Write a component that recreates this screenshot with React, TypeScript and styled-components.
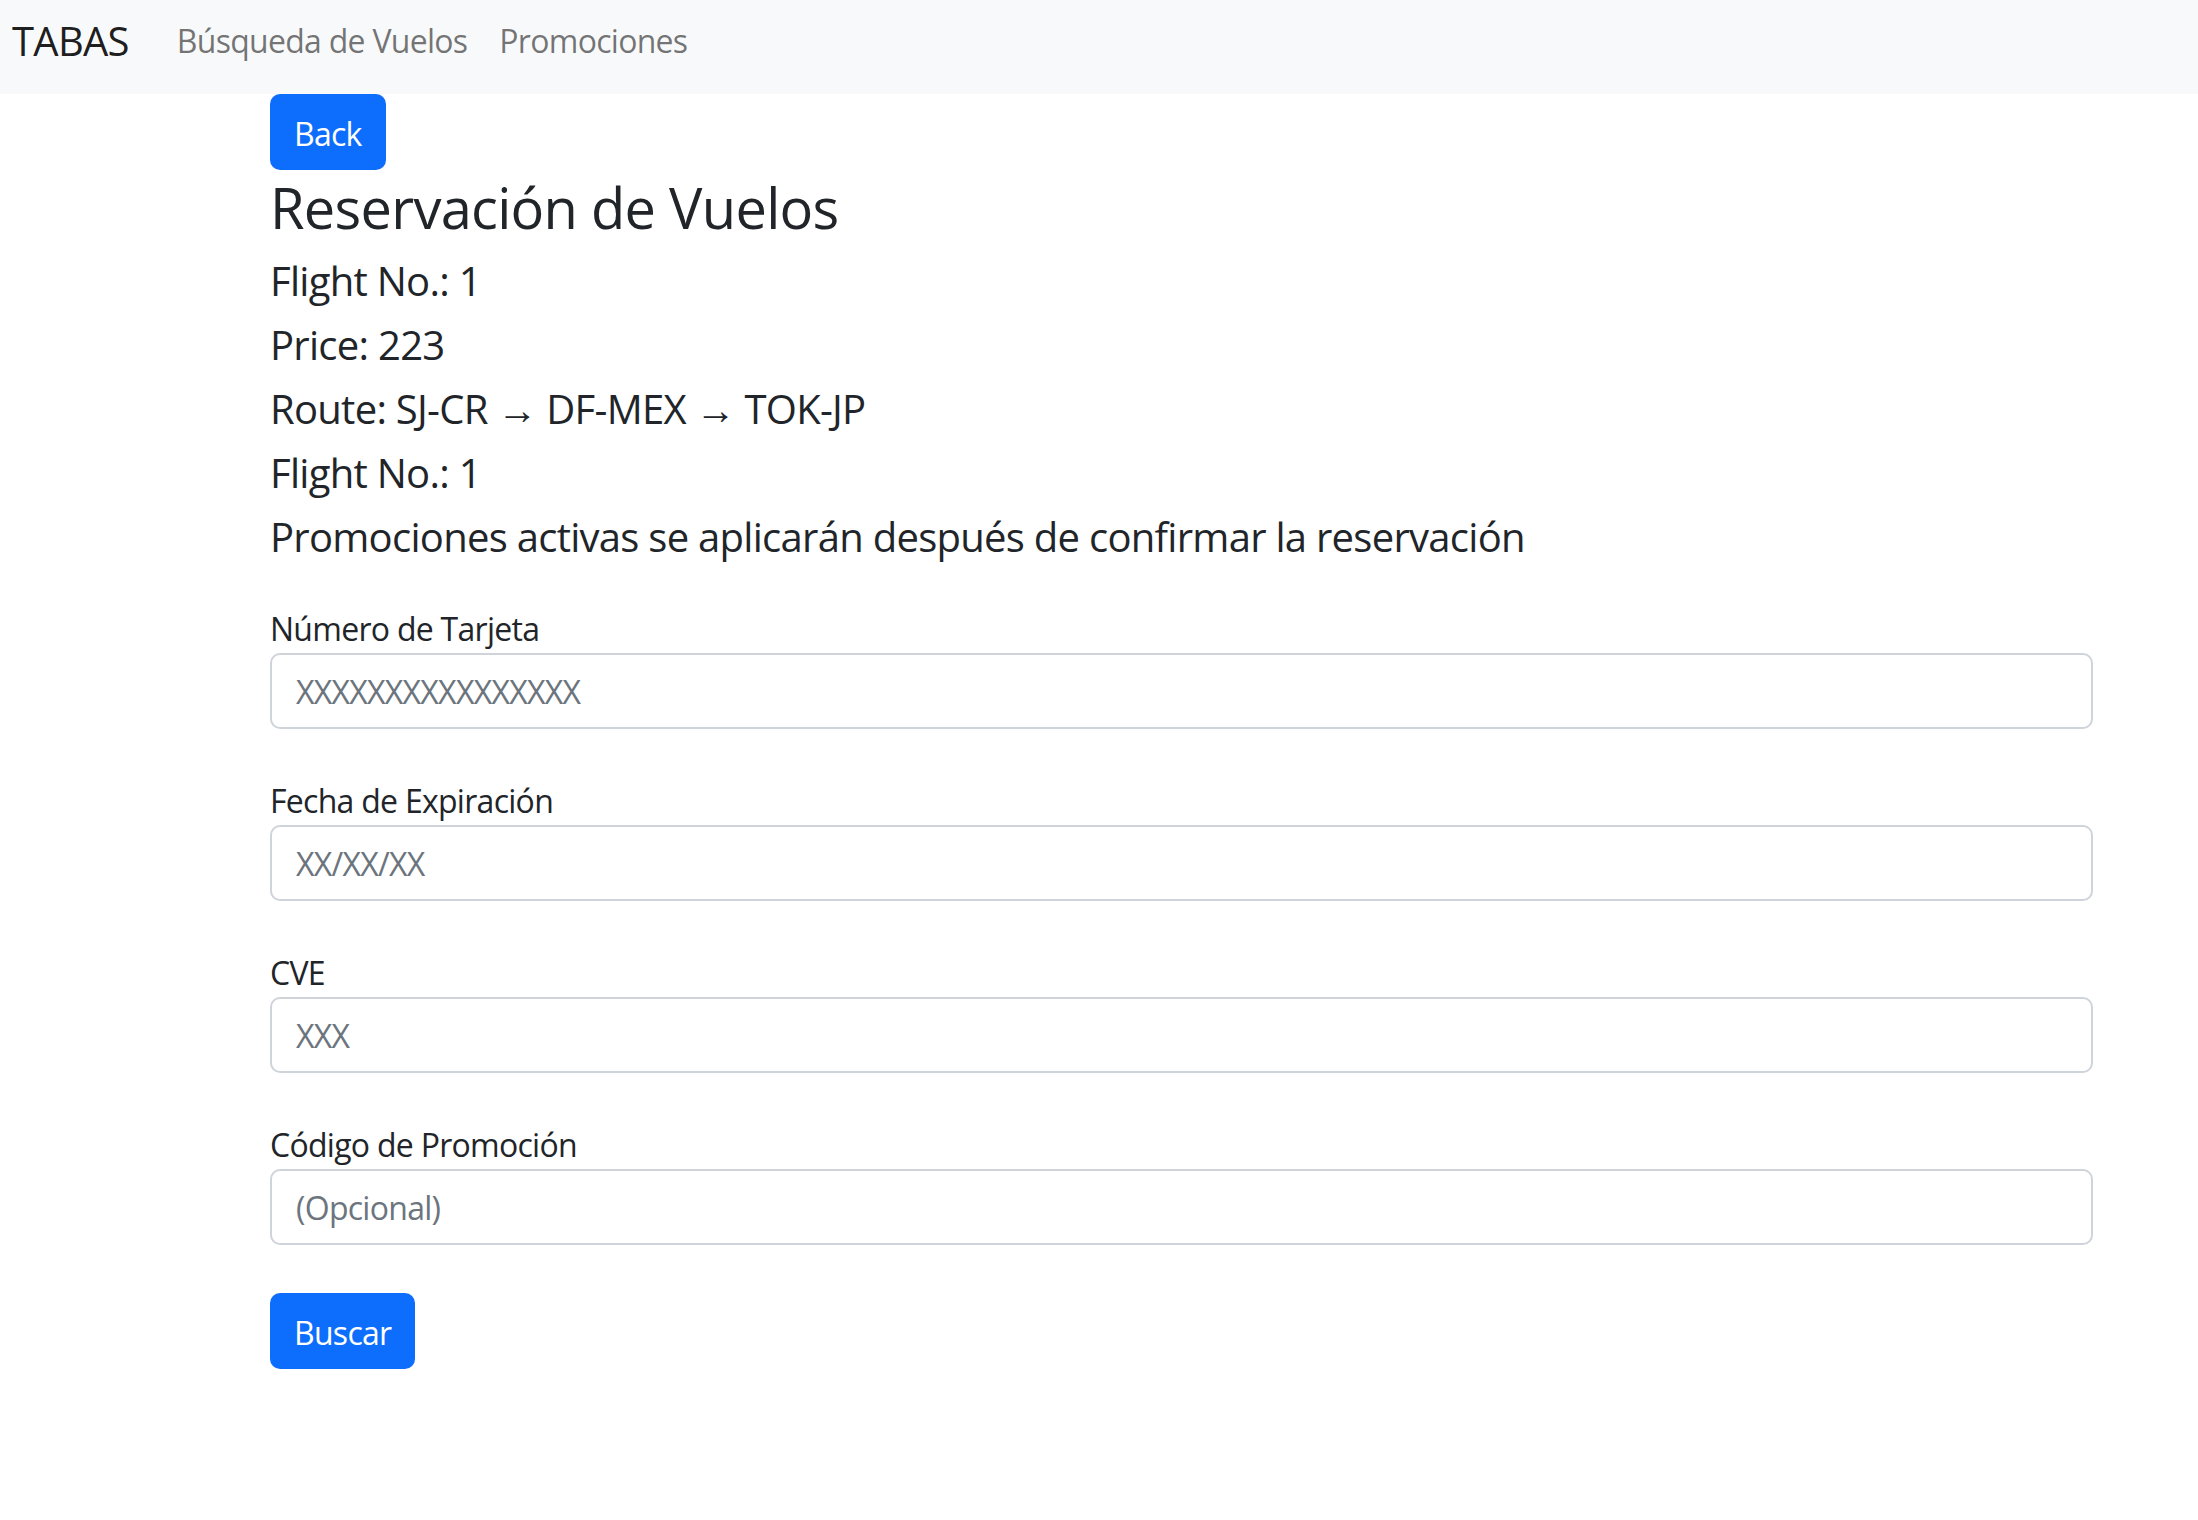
import styled, { createGlobalStyle } from "styled-components";

const GlobalStyle = createGlobalStyle`
  * {
    box-sizing: border-box;
  }
  html,
  body {
    margin: 0;
    padding: 0;
    background: #fff;
  }
  body {
    font-family: "Open Sans", "Noto Sans", sans-serif;
    letter-spacing: -0.045em;
    color: #212529;
  }
`;

const Navbar = styled.nav`
  display: flex;
  align-items: center;
  height: 94px;
  padding: 0 12px 12px;
  background-color: #f8f9fa;
`;

const Brand = styled.a`
  font-size: 40px;
  line-height: 60px;
  margin-right: 32px;
  color: rgba(0, 0, 0, 0.9);
  text-decoration: none;
`;

const NavLink = styled.a`
  font-size: 32px;
  line-height: 48px;
  padding: 0 16px;
  color: rgba(0, 0, 0, 0.55);
  text-decoration: none;
`;

const Main = styled.main`
  margin-left: 270px;
  width: 1823px;
`;

const Button = styled.button`
  display: inline-flex;
  align-items: center;
  height: 76px;
  padding: 2px 24px 0;
  border: none;
  border-radius: 10px;
  background-color: #0d6efd;
  color: #fff;
  font-family: inherit;
  letter-spacing: inherit;
  font-size: 32px;
  cursor: pointer;
`;

const Title = styled.h3`
  margin: 0 0 16px;
  padding-top: 4px;
  font-size: 56px;
  line-height: 1.2;
  font-weight: 400;
`;

const Info = styled.h5<{ $last?: boolean }>`
  margin: 0 0 ${(props) => (props.$last ? "44px" : "16px")};
  font-size: 40px;
  line-height: 48px;
  font-weight: 400;
`;

const Form = styled.form`
  display: flex;
  flex-direction: column;
  align-items: flex-start;
`;

const Field = styled.div`
  display: flex;
  flex-direction: column;
  width: 100%;
  margin-bottom: 48px;
`;

const Label = styled.label`
  font-size: 32px;
  line-height: 48px;
`;

const Input = styled.input`
  width: 100%;
  height: 76px;
  padding: 0 24px;
  border: 2px solid #ced4da;
  border-radius: 10px;
  font-family: inherit;
  letter-spacing: inherit;
  font-size: 32px;
  color: #212529;
  background: #fff;
  outline: none;

  &::placeholder {
    color: #6c757d;
  }
`;

const fields = [
  { id: "card", label: "Número de Tarjeta", placeholder: "XXXXXXXXXXXXXXXX" },
  { id: "exp", label: "Fecha de Expiración", placeholder: "XX/XX/XX" },
  { id: "cve", label: "CVE", placeholder: "XXX" },
  { id: "promo", label: "Código de Promoción", placeholder: "(Opcional)" },
];

export default function App() {
  return (
    <>
      <GlobalStyle />
      <Navbar>
        <Brand href="#">TABAS</Brand>
        <NavLink href="#">Búsqueda de Vuelos</NavLink>
        <NavLink href="#">Promociones</NavLink>
      </Navbar>
      <Main>
        <Button type="button">Back</Button>
        <Title>Reservación de Vuelos</Title>
        <Info>Flight No.: 1</Info>
        <Info>Price: 223</Info>
        <Info>Route: SJ-CR → DF-MEX → TOK-JP</Info>
        <Info>Flight No.: 1</Info>
        <Info $last>
          Promociones activas se aplicarán después de confirmar la reservación
        </Info>
        <Form onSubmit={(e) => e.preventDefault()}>
          {fields.map((f) => (
            <Field key={f.id}>
              <Label htmlFor={f.id}>{f.label}</Label>
              <Input id={f.id} type="text" placeholder={f.placeholder} />
            </Field>
          ))}
          <Button type="submit">Buscar</Button>
        </Form>
      </Main>
    </>
  );
}
